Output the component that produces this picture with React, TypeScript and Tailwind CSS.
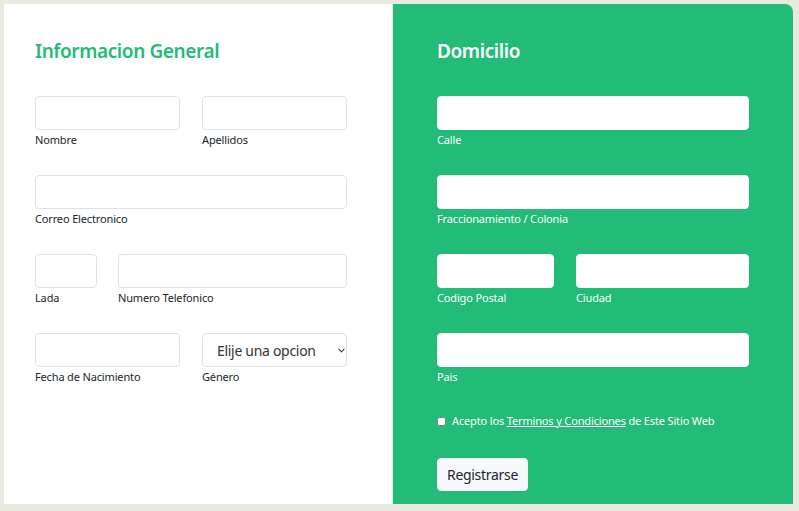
import React from 'react';

const font = { fontFamily: '"Noto Sans", "Open Sans", sans-serif' };

const Field = ({ label, className = '', light = false }: { label: string; className?: string; light?: boolean }) => (
  <div className={className}>
    <input
      type="text"
      className={`block w-full h-[34px] rounded-[4px] bg-white outline-none ${light ? 'border border-white' : 'border border-[#dee2e6]'}`}
    />
    <label className={`block mt-[2px] text-[11px] leading-[15px] tracking-[-0.15px] ${light ? 'text-white' : 'text-[#212529]'}`}>{label}</label>
  </div>
);

export default function App() {
  return (
    <div className="w-[799px] h-[511px] bg-[#e8e9df] pt-[4px] pl-[4px]" style={font}>
      <div className="flex w-[789px] h-[500px] rounded-tr-[8px] overflow-hidden">
        {/* informacion general */}
        <div className="w-[389px] bg-white pl-[31px] pt-[33px] border-r border-[#e3e6e4]">
          <h2 className="text-[19px] leading-[28px] font-semibold tracking-[-0.4px] text-[#22bb77]">Informacion General</h2>
          <div className="w-[312px] mt-[31px] flex flex-col gap-[28px]">
            <div className="flex gap-[22px]">
              <Field label="Nombre" className="flex-1" />
              <Field label="Apellidos" className="flex-1" />
            </div>
            <Field label="Correo Electronico" />
            <div className="flex gap-[21px]">
              <Field label="Lada" className="w-[62px]" />
              <Field label="Numero Telefonico" className="flex-1" />
            </div>
            <div className="flex gap-[22px]">
              <Field label="Fecha de Nacimiento" className="flex-1" />
              <div className="flex-1">
                <div className="relative">
                  <select className="block w-full h-[34px] appearance-none rounded-[4px] border border-[#dee2e6] bg-white pl-[14px] text-[14px] tracking-[-0.3px] text-[#333] outline-none">
                    <option>Elije una opcion</option>
                  </select>
                  <svg className="pointer-events-none absolute right-[2px] top-[14px]" width="7" height="7" viewBox="0 0 16 16" fill="none" stroke="#343a40" strokeWidth="2.5" strokeLinecap="round" strokeLinejoin="round">
                    <path d="M2 5l6 6 6-6" />
                  </svg>
                </div>
                <label className="block mt-[2px] text-[11px] leading-[15px] tracking-[-0.15px] text-[#212529]">Género</label>
              </div>
            </div>
          </div>
        </div>

        {/* domicilio */}
        <div className="flex-1 bg-[#22bb77] pl-[44px] pt-[33px]">
          <h2 className="text-[19px] leading-[28px] font-semibold tracking-[-0.4px] text-white">Domicilio</h2>
          <div className="w-[312px] mt-[31px] flex flex-col gap-[28px]">
            <Field label="Calle" light />
            <Field label="Fraccionamiento / Colonia" light />
            <div className="flex gap-[22px]">
              <Field label="Codigo Postal" className="w-[117px]" light />
              <Field label="Ciudad" className="flex-1" light />
            </div>
            <Field label="Pais" light />
          </div>
          <div className="mt-[29px] flex items-center gap-[6px] text-[11px] tracking-[-0.15px] text-white">
            <input type="checkbox" className="w-[9px] h-[9px] m-0 accent-white" />
            <span>
              Acepto los <a className="underline">Terminos y Condiciones</a> de Este Sitio Web
            </span>
          </div>
          <button className="mt-[28px] h-[33px] w-[91px] rounded-[4px] bg-[#f8f9fa] border border-[#f8f9fa] text-[14px] tracking-[-0.3px] text-[#212529]">
            Registrarse
          </button>
        </div>
      </div>
    </div>
  );
}
